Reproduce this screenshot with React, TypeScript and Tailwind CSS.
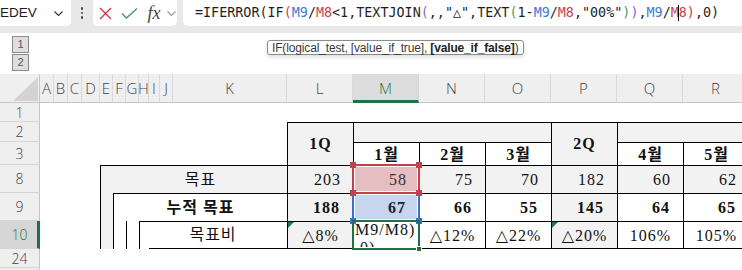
const HEAD = [
  { l: 'A', c: 'col-start-2' },
  { l: 'B', c: 'col-start-3' },
  { l: 'C', c: 'col-start-4' },
  { l: 'D', c: 'col-start-5' },
  { l: 'E', c: 'col-start-6' },
  { l: 'F', c: 'col-start-7' },
  { l: 'G', c: 'col-start-8' },
  { l: 'H', c: 'col-start-9' },
  { l: 'I', c: 'col-start-10' },
  { l: 'J', c: 'col-start-11' },
  { l: 'K', c: 'col-start-12' },
  { l: 'L', c: 'col-start-13' },
  { l: 'M', c: 'col-start-14', sel: true },
  { l: 'N', c: 'col-start-15' },
  { l: 'O', c: 'col-start-16' },
  { l: 'P', c: 'col-start-17' },
  { l: 'Q', c: 'col-start-18' },
  { l: 'R', c: 'col-start-19' },
];

const ROWS = [
  { n: '1', c: 'row-start-2' },
  { n: '2', c: 'row-start-3' },
  { n: '3', c: 'row-start-4' },
  { n: '8', c: 'row-start-5' },
  { n: '9', c: 'row-start-6' },
  { n: '10', c: 'row-start-7', sel: true },
  { n: '24', c: 'row-start-8' },
  { n: '25', c: 'row-start-9' },
];

// L..R except M (M is the selected column, drawn by hand)
const DATA = [
  { c: 'col-start-13', q: true, goal: '203', acc: '188', rate: '△8%' },
  { c: 'col-start-15', goal: '75', acc: '66', rate: '△12%' },
  { c: 'col-start-16', goal: '70', acc: '55', rate: '△22%' },
  { c: 'col-start-17', q: true, goal: '182', acc: '145', rate: '△20%' },
  { c: 'col-start-18', goal: '60', acc: '64', rate: '106%' },
  { c: 'col-start-19', goal: '62', acc: '65', rate: '105%' },
];

const MONTHS = [
  { c: 'col-start-14', t: '1월' },
  { c: 'col-start-15', t: '2월' },
  { c: 'col-start-16', t: '3월' },
  { c: 'col-start-18', t: '4월' },
  { c: 'col-start-19', t: '5월' },
];

function Chevron({ color }: { color: string }) {
  return (
    <svg width="9" height="5" viewBox="0 0 9 5">
      <polyline points="0.5,0.5 4.5,4.5 8.5,0.5" fill="none" stroke={color} strokeWidth="1.1" />
    </svg>
  );
}

export default function App() {
  return (
    <div className="relative h-[270px] w-[742px] overflow-hidden bg-white font-['Liberation_Sans',sans-serif]">
      {/* Formula bar */}
      <div className="flex h-[33px] items-start bg-[#e8e8e8]">
        <div className="flex h-[26px] w-[71px] items-center justify-between rounded-br-[5px] bg-white pr-[8px]">
          <span className="text-[13.5px] text-[#1b1b1b]">EDEV</span>
          <Chevron color="#333" />
        </div>
        <div className="flex h-[26px] w-[22px] flex-col items-center justify-center gap-[2px]">
          <span className="h-[2.5px] w-[2.5px] rounded-full bg-[#444]" />
          <span className="h-[2.5px] w-[2.5px] rounded-full bg-[#444]" />
          <span className="h-[2.5px] w-[2.5px] rounded-full bg-[#444]" />
        </div>
        <div className="flex h-[26px] w-[84px] items-center rounded-b-[5px] bg-white">
          <div className="flex w-[24px] justify-center">
            <svg width="13" height="13" viewBox="0 0 13 13">
              <path d="M1 1 12 12M12 1 1 12" stroke="#d13438" strokeWidth="1.3" />
            </svg>
          </div>
          <div className="flex w-[24px] justify-center">
            <svg width="17" height="11" viewBox="0 0 17 11">
              <path d="M1 5.5 5.5 10 16 0.5" fill="none" stroke="#3f9a5c" strokeWidth="1.3" />
            </svg>
          </div>
          <div className="flex w-[26px] justify-center">
            <span className="font-['Liberation_Serif',serif] text-[18px] italic leading-none text-[#444]">fx</span>
          </div>
          <div className="flex w-[9px] justify-center">
            <Chevron color="#999" />
          </div>
        </div>
        <div className="ml-[6px] flex h-[26px] flex-1 items-center rounded-bl-[5px] bg-white pl-[12px]">
          <span className="flex items-center whitespace-nowrap font-['DejaVu_Sans_Mono',monospace] text-[13.4px] text-[#1f1f1f]">
            =IFERROR(IF<span className="text-[#c8434f]">(</span>
            <span className="text-[#3b7bd6]">M9</span>/<span className="text-[#c8434f]">M8</span>&lt;1,TEXTJOIN
            <span className="text-[#9b5ccb]">(</span>,,"△",TEXT<span className="text-[#3f9e66]">(</span>1-
            <span className="text-[#3b7bd6]">M9</span>/<span className="text-[#c8434f]">M8</span>,"00%"
            <span className="text-[#3f9e66]">)</span>
            <span className="text-[#9b5ccb]">)</span>,<span className="text-[#3b7bd6]">M9</span>/
            <span className="text-[#c8434f]">M</span>
            <span className="mx-[-0.5px] h-[16px] w-px bg-black" />
            <span className="text-[#c8434f]">8)</span>,0)
          </span>
        </div>
      </div>

      {/* Outline level buttons + argument tooltip */}
      <div className="relative h-[41px]">
        <div className="flex flex-col gap-[1px] pl-[12px] pt-[3px]">
          <div className="flex h-[17px] w-[17px] items-center justify-center border border-[#8a8a8a] bg-[#dedede] text-[11px] text-[#555]">1</div>
          <div className="flex h-[17px] w-[17px] items-center justify-center border border-[#8a8a8a] bg-[#dedede] text-[11px] text-[#555]">2</div>
        </div>
        <div className="absolute left-[267px] top-[7px] flex h-[15px] w-[257px] items-center whitespace-nowrap rounded-[3px] border border-[#8a8a8a] bg-white px-[4px] text-[12px] leading-none tracking-[-0.15px] text-[#3a3a3a] shadow-[0_2px_4px_rgba(0,0,0,0.15)]">
          IF(logical_test, [value_if_true],&nbsp;<b className="text-[#222]">[value_if_false]</b>)
        </div>
      </div>

      {/* Sheet */}
      <div className="grid grid-cols-[40px_14px_14px_14px_18px_13px_13px_13px_10px_11px_13px_114px_66px_66px_66px_66px_66px_66px_66px] grid-rows-[29px_19px_20px_23px_28px_28px_28px_19px_19px] font-['Liberation_Serif','DejaVu_Serif','Noto_Sans_CJK_KR',serif] text-[16px] tracking-[1px] text-[#111]">
        {/* corner */}
        <div className="col-start-1 row-start-1 flex items-end justify-end border-b border-r border-[#c6c6c6] bg-[#efefef] pb-[1px] pr-[1px]">
          <svg width="25" height="24" viewBox="0 0 25 24">
            <polygon points="0,24 25,24 25,0" fill="#d3d3d3" />
          </svg>
        </div>

        {HEAD.map((h) => (
          <div
            key={h.l}
            className={`${h.c} row-start-1 flex items-center justify-center font-['Open_Sans',sans-serif] text-[15px] font-light tracking-normal ${
              h.sel
                ? 'border-b-[3px] border-r border-b-[#1e7145] border-r-[#d6d6d6] bg-[#dcdcdc] pt-[2px] text-[#1e7145]'
                : 'border-b border-r border-b-[#c6c6c6] border-r-[#dadada] bg-[#efefef] text-[#444]'
            }`}
          >
            {h.l}
          </div>
        ))}

        {ROWS.map((r) => (
          <div
            key={r.n}
            className={`col-start-1 ${r.c} flex items-center justify-center overflow-hidden border-b border-b-[#d6d6d6] font-['Open_Sans',sans-serif] text-[14px] font-light tracking-normal ${
              r.sel
                ? 'border-r-[3px] border-r-[#1e7145] bg-[#d6d6d6] pl-[2px] text-[#1e7145]'
                : 'border-r border-r-[#c6c6c6] bg-[#efefef] text-[#444]'
            }`}
          >
            {r.n}
          </div>
        ))}

        {/* Header rows 2-3 */}
        <div className="col-start-13 row-span-2 row-start-3 flex items-center justify-center border-l border-t border-black bg-[#f2f2f2] font-bold">1Q</div>
        <div className="col-span-3 col-start-14 row-start-3 border-l border-t border-black bg-[#f2f2f2]" />
        <div className="col-start-17 row-span-2 row-start-3 flex items-center justify-center border-l border-t border-black bg-[#f2f2f2] font-bold">2Q</div>
        <div className="col-span-2 col-start-18 row-start-3 border-l border-t border-black bg-[#f2f2f2]" />
        {MONTHS.map((m) => (
          <div key={m.t} className={`${m.c} row-start-4 flex items-center justify-center border-l border-t border-black bg-white pt-[1px] font-bold`}>
            {m.t}
          </div>
        ))}

        {/* Row labels */}
        <div className="col-span-7 col-start-6 row-start-5 flex items-center justify-center border-l border-t border-black bg-[#f2f2f2] pl-[13px]">목표</div>
        <div className="col-start-6 row-span-2 row-start-6 border-l border-black bg-[#f2f2f2]" />
        <div className="col-span-6 col-start-7 row-start-6 flex items-center justify-center border-l border-t border-black bg-white font-bold">누적 목표</div>
        <div className="col-start-7 row-start-7 border-l border-black" />
        <div className="col-start-8 row-start-7 border-l border-black" />
        <div className="col-start-9 row-start-7 border-l border-t border-black" />
        <div className="col-span-3 col-start-10 row-start-7 flex items-center justify-center border-b border-t border-black pr-[10px]">목표비</div>

        {/* Values */}
        {DATA.map((d) => (
          <div key={d.c} className="contents">
            <div className={`${d.c} row-start-5 flex items-center justify-end border-l border-t border-black bg-[#f2f2f2] pr-[12px]`}>{d.goal}</div>
            <div className={`${d.c} row-start-6 flex items-center justify-end border-l border-t border-black pr-[13px] font-bold ${d.q ? 'bg-[#f2f2f2]' : 'bg-white'}`}>{d.acc}</div>
            <div className={`${d.c} relative row-start-7 flex items-center justify-center border-b border-l border-t border-black pt-[1px] ${d.q ? 'bg-[#f2f2f2]' : 'bg-white'}`}>
              {d.q && <span className="absolute left-0 top-0 border-r-[6px] border-t-[6px] border-r-transparent border-t-[#16803c]" />}
              {d.rate}
            </div>
          </div>
        ))}

        {/* Selected column M */}
        <div className="relative col-start-14 row-start-5 flex items-center justify-end border-l border-t border-black bg-[#e6bec2] pr-[12px] text-[#333]">
          58
          <div className="absolute -bottom-[1px] -left-[2px] -right-[1px] -top-[2px] z-20 border-2 border-[#c4404c] shadow-[inset_0_0_0_1px_#fff]">
            <span className="absolute -left-[4px] -top-[4px] h-[6px] w-[6px] bg-[#c4404c]" />
            <span className="absolute -right-[4px] -top-[4px] h-[6px] w-[6px] bg-[#c4404c]" />
            <span className="absolute -bottom-[4px] -left-[4px] h-[6px] w-[6px] bg-[#c4404c]" />
            <span className="absolute -bottom-[4px] -right-[4px] h-[6px] w-[6px] bg-[#c4404c]" />
          </div>
        </div>
        <div className="relative col-start-14 row-start-6 flex items-center justify-end border-l border-t border-black bg-[#c7d5ee] pr-[13px] font-bold text-[#1a2433]">
          67
          <div className="absolute -bottom-[1px] -left-[2px] -right-[1px] -top-[2px] z-10 border-2 border-[#3b6fcb] shadow-[inset_0_0_0_1px_#fff]">
            <span className="absolute -bottom-[4px] -left-[4px] h-[6px] w-[6px] bg-[#3b6fcb]" />
            <span className="absolute -bottom-[4px] -right-[4px] h-[6px] w-[6px] bg-[#3b6fcb]" />
          </div>
        </div>
        <div className="relative col-start-14 row-start-7 border-b border-l border-t border-black bg-white">
          <div className="h-full overflow-hidden pl-[1px] leading-[18px] -mt-[1px]">
            M9/M8)
            <br />
            ,0)
          </div>
          <div className="absolute -bottom-[2px] -left-[2px] -right-[1px] -top-[2px] z-10 border-2 border-[#1e7145]">
            <span className="absolute -bottom-[4px] -right-[4px] h-[6px] w-[6px] border border-white bg-[#1e7145]" />
          </div>
        </div>
      </div>
    </div>
  );
}
